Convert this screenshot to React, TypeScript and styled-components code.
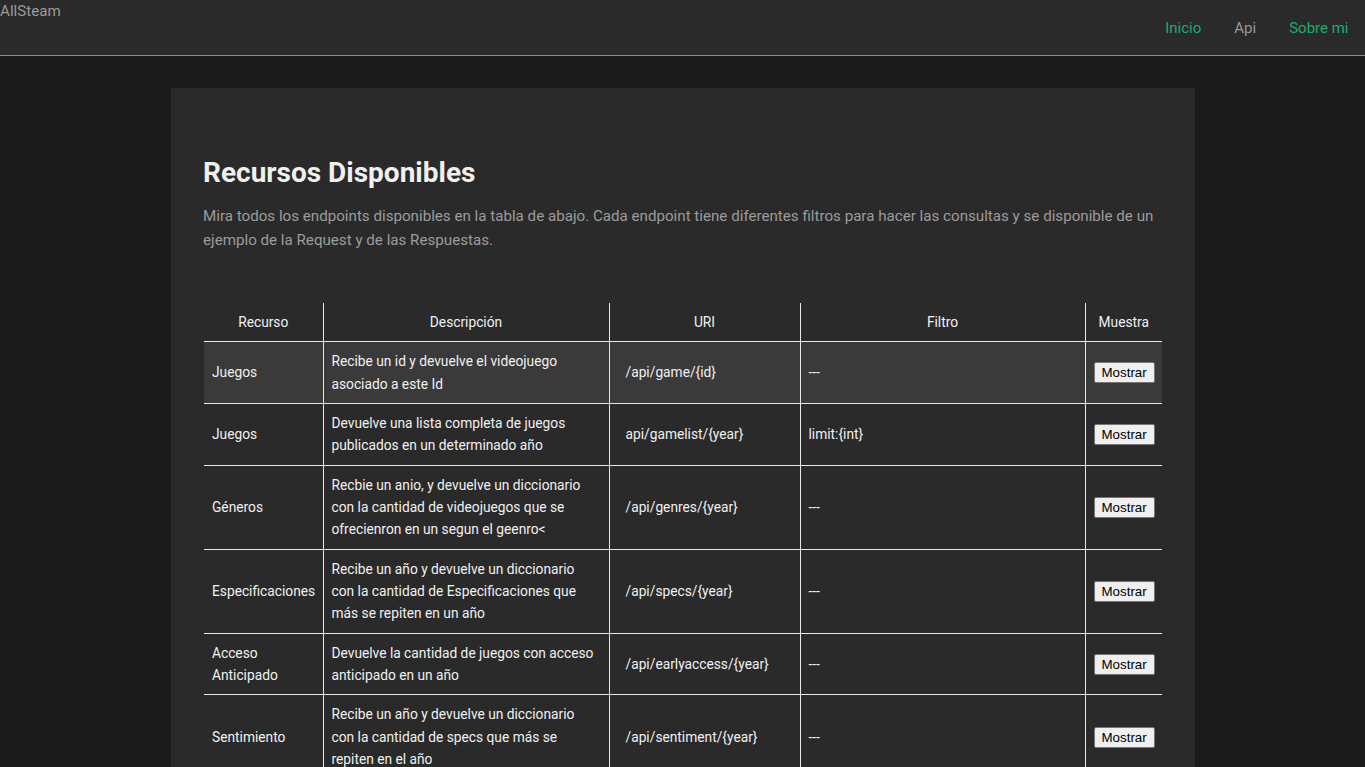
import React from "react";
import styled, { createGlobalStyle } from "styled-components";

const GlobalStyle = createGlobalStyle`
  html, body {
    margin: 0;
    padding: 0;
    background: #1b1b1b;
    font-family: Roboto, "Liberation Sans", Arial, sans-serif;
  }
`;

const Header = styled.header`
  height: 55px;
  display: flex;
  justify-content: space-between;
  align-items: center;
  background: #2a2a2a;
  border-bottom: 1px solid #8a8a8a;
`;

const Logo = styled.div`
  align-self: flex-start;
  color: #9a9a9a;
  font-size: 15.2px;
  line-height: 22px;
`;

const Nav = styled.nav`
  display: flex;
`;

const NavLink = styled.a<{ $active?: boolean }>`
  padding: 0 16.5px;
  font-size: 15px;
  line-height: 22px;
  color: ${(p) => (p.$active ? "#1aae6f" : "#9a9a9a")};
  text-decoration: none;
  cursor: pointer;
`;

const Main = styled.main`
  padding: 32px 0 0 1px;
  display: flex;
  justify-content: center;
`;

const Card = styled.section`
  width: 1024px;
  box-sizing: border-box;
  background: #2a2a2a;
  padding: 64px 32px 32px 32px;
`;

const Title = styled.h1`
  margin: 0 0 10px 0;
  font-size: 28px;
  line-height: 42px;
  font-weight: 700;
  color: #f0f0f0;
`;

const Lead = styled.p`
  margin: 0 0 51px 0;
  font-size: 15.15px;
  line-height: 24px;
  color: #9c9c9c;
`;

const Table = styled.table`
  border-collapse: collapse;
  table-layout: fixed;
  margin-left: 1px;
  width: 958px;
  font-size: 13.75px;
  line-height: 22.33px;
  color: #f0f0f0;
`;

const Col = styled.col<{ $w: number }>`
  width: ${(p) => p.$w}px;
`;

const Th = styled.th`
  font-weight: 400;
  text-align: center;
  padding: 8px;
  border-bottom: 1px solid #e8e8e8;
  border-left: 1px solid #e8e8e8;
  &:first-child {
    border-left: none;
  }
`;

const Row = styled.tr<{ $hl?: boolean }>`
  background: ${(p) => (p.$hl ? "#3a3a3a" : "transparent")};
`;

const Td = styled.td<{ $wide?: boolean }>`
  padding: 8px 12px 8px ${(p) => (p.$wide ? "16px" : "8px")};
  border-bottom: 1px solid #e8e8e8;
  border-left: 1px solid #e8e8e8;
  vertical-align: middle;
  &:first-child {
    border-left: none;
  }
`;

const Button = styled.button`
  font-family: "Liberation Sans", Arial, sans-serif;
  font-size: 13.33px;
  color: #000;
  background: #efefef;
  border: 1px solid #767676;
  border-radius: 2px;
  padding: 1px 7px;
  line-height: 17px;
`;

type Item = {
  recurso: string;
  desc: string;
  uri: string;
  filtro: string;
};

const items: Item[] = [
  {
    recurso: "Juegos",
    desc: "Recibe un id y devuelve el videojuego asociado a este Id",
    uri: "/api/game/{id}",
    filtro: "---",
  },
  {
    recurso: "Juegos",
    desc: "Devuelve una lista completa de juegos publicados en un determinado año",
    uri: "api/gamelist/{year}",
    filtro: "limit:{int}",
  },
  {
    recurso: "Géneros",
    desc: "Recbie un anio, y devuelve un diccionario con la cantidad de videojuegos que se ofrecienron en un segun el geenro<",
    uri: "/api/genres/{year}",
    filtro: "---",
  },
  {
    recurso: "Especificaciones",
    desc: "Recibe un año y devuelve un diccionario con la cantidad de Especificaciones que más se repiten en un año",
    uri: "/api/specs/{year}",
    filtro: "---",
  },
  {
    recurso: "Acceso Anticipado",
    desc: "Devuelve la cantidad de juegos con acceso anticipado en un año",
    uri: "/api/earlyaccess/{year}",
    filtro: "---",
  },
  {
    recurso: "Sentimiento",
    desc: "Recibe un año y devuelve un diccionario con la cantidad de specs que más se repiten en el año",
    uri: "/api/sentiment/{year}",
    filtro: "---",
  },
];

export default function App() {
  return (
    <>
      <GlobalStyle />
      <Header>
        <Logo>AllSteam</Logo>
        <Nav>
          <NavLink $active>Inicio</NavLink>
          <NavLink>Api</NavLink>
          <NavLink $active>Sobre mi</NavLink>
        </Nav>
      </Header>
      <Main>
        <Card>
          <Title>Recursos Disponibles</Title>
          <Lead>
            Mira todos los endpoints disponibles en la tabla de abajo. Cada endpoint tiene diferentes
            filtros para hacer las consultas y se disponible de un ejemplo de la Request y de las
            Respuestas.
          </Lead>
          <Table>
            <colgroup>
              <Col $w={119} />
              <Col $w={286} />
              <Col $w={191} />
              <Col $w={285} />
              <Col $w={77} />
            </colgroup>
            <thead>
              <tr>
                <Th>Recurso</Th>
                <Th>Descripción</Th>
                <Th>URI</Th>
                <Th>Filtro</Th>
                <Th>Muestra</Th>
              </tr>
            </thead>
            <tbody>
              {items.map((it, i) => (
                <Row key={i} $hl={i === 0}>
                  <Td>{it.recurso}</Td>
                  <Td>{it.desc}</Td>
                  <Td $wide>{it.uri}</Td>
                  <Td>{it.filtro}</Td>
                  <Td>
                    <Button>Mostrar</Button>
                  </Td>
                </Row>
              ))}
            </tbody>
          </Table>
        </Card>
      </Main>
    </>
  );
}
